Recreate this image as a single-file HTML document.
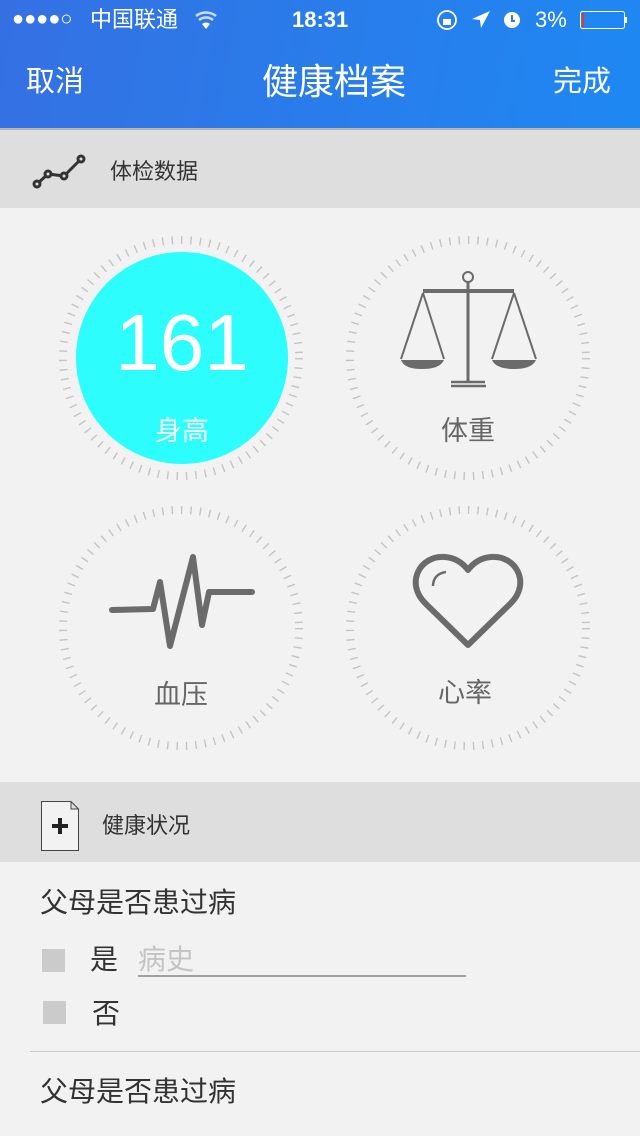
<!DOCTYPE html>
<html><head><meta charset="utf-8"><style>
*{margin:0;padding:0;box-sizing:border-box}
body{width:640px;height:1136px;overflow:hidden;background:#f2f2f2;font-family:"Liberation Sans","Noto Sans CJK SC",sans-serif;position:relative}
.a{position:absolute;white-space:nowrap;line-height:1}
</style></head><body>
<div class="a" style="left:0;top:0;width:640px;height:128px;background:linear-gradient(100deg,#3570e3,#1e88f2)"></div>
<div class="a" style="left:0;top:128px;width:640px;height:2px;background:#b5b5b5"></div>
<div class="a" style="left:0;top:130px;width:640px;height:78px;background:#dedede"></div>
<div class="a" style="left:0;top:782px;width:640px;height:80px;background:#dedede"></div>
<div class="a" style="left:30px;top:1051px;width:610px;height:1px;background:#c8c8c8"></div>

<div class="a" style="left:12px;top:9px;color:#fff;font-size:20px">●●●●○</div>
<div class="a" style="left:90px;top:9px;color:#fff;font-size:22px">中国联通</div>
<div class="a" style="left:292px;top:9px;color:#fff;font-size:22px;font-weight:bold">18:31</div>
<div class="a" style="left:535px;top:9px;color:#fff;font-size:22px">3%</div>
<svg class="a" style="left:0;top:0" width="640" height="40">
<path d="M196 16a16 16 0 0 1 20 0M199 20a11 11 0 0 1 14 0" stroke="#fff" stroke-width="2.5" fill="none" opacity=".75"/>
<path d="M202 24a6 6 0 0 1 8 0L206 29z" fill="#fff"/>
<circle cx="447" cy="20" r="9" stroke="#fff" stroke-width="1.8" fill="none"/><rect x="443" y="19" width="8" height="6" fill="#fff"/>
<path d="M490 11L472 19l8 1 1 8z" fill="#fff"/>
<circle cx="512" cy="20" r="8" fill="#fff"/><path d="M512 15v6h3" stroke="#3a75e8" stroke-width="2" fill="none"/>
<rect x="580.5" y="11.5" width="44" height="17" rx="2" stroke="#fff" fill="none"/><rect x="582" y="13" width="2" height="14" fill="#e33"/><rect x="625" y="17" width="2" height="6" fill="#fff"/>
</svg>
<div class="a" style="left:26px;top:68px;color:#fff;font-size:29px">取消</div>
<div class="a" style="left:262px;top:64px;color:#fff;font-size:36px">健康档案</div>
<div class="a" style="left:553px;top:68px;color:#fff;font-size:29px">完成</div>

<svg class="a" style="left:0;top:0" width="640" height="1136">
<g stroke="#333" stroke-width="3" fill="none"><path d="M37 184L48 174 64 176 80 160"/><circle cx="37" cy="184" r="3" fill="#ddd"/><circle cx="48" cy="174" r="3" fill="#ddd"/><circle cx="64" cy="176" r="3" fill="#ddd"/><circle cx="81" cy="159" r="3" fill="#ddd"/></g>
<g fill="none" stroke="#c4c4c4" stroke-width="8" stroke-dasharray="1.4 8.02">
<circle cx="181" cy="358" r="118"/><circle cx="468" cy="358" r="118"/><circle cx="181" cy="628" r="118"/><circle cx="468" cy="628" r="118"/></g>
<circle cx="182" cy="358" r="106" fill="#2efdfd"/>
<g stroke="#6b6b6b" fill="none" stroke-width="2">
<circle cx="468" cy="277" r="5"/><path d="M468 282V382" stroke-width="3"/><path d="M423 291H514" stroke-width="4"/>
<path d="M423 293L401 359M423 293L444 359M514 293L492 359M514 293L536 359"/>
<path d="M451 382H485M451 386H486" stroke-width="2.5"/>
</g>
<path d="M401 360H444Q440 369 422 369T401 360z M492 360H536Q532 369 514 369T492 360z" fill="#6b6b6b"/>
<path d="M112 610L153 609 160 582 170 646 193 557 202 625 209 592 252 592" stroke="#6b6b6b" stroke-width="6" fill="none" stroke-linejoin="round" stroke-linecap="round"/>
<path d="M468 645L425 603C405 583 420 555 445 557C458 558 465 566 468 570C471 566 478 558 491 557C516 555 531 583 511 603Z" stroke="#6b6b6b" stroke-width="6" fill="none" stroke-linejoin="round"/>
<path d="M433 586C433 578 438 573 446 572" stroke="#6b6b6b" stroke-width="2.5" fill="none"/>
<path d="M41.5 801.5H71L78.5 809V850.5H41.5Z M71 801.5V809H78.5" stroke="#444" fill="#f2f2f2"/>
<path d="M60 818V834M52 826H68" stroke="#222" stroke-width="4"/>
<rect x="42" y="949" width="23" height="23" fill="#cbcbcb"/><rect x="43" y="1001" width="23" height="23" fill="#cbcbcb"/>
<rect x="138" y="975" width="328" height="2" fill="#a0a0a0"/>
</svg>
<div class="a" style="left:110px;top:161px;color:#333;font-size:22px">体检数据</div>
<div class="a" style="left:82px;top:303px;width:200px;text-align:center;color:#fff;font-size:80px">161</div>
<div class="a" style="left:155px;top:418px;color:#fff;font-size:27px">身高</div>
<div class="a" style="left:441px;top:418px;color:#666;font-size:27px">体重</div>
<div class="a" style="left:154px;top:682px;color:#666;font-size:27px">血压</div>
<div class="a" style="left:438px;top:680px;color:#666;font-size:27px">心率</div>
<div class="a" style="left:102px;top:815px;color:#333;font-size:22px">健康状况</div>
<div class="a" style="left:40px;top:889px;color:#333;font-size:28px">父母是否患过病</div>
<div class="a" style="left:90px;top:946px;color:#333;font-size:28px">是</div>
<div class="a" style="left:138px;top:946px;color:#c4c4c4;font-size:28px">病史</div>
<div class="a" style="left:92px;top:1000px;color:#333;font-size:28px">否</div>
<div class="a" style="left:40px;top:1078px;color:#333;font-size:28px">父母是否患过病</div>
</body></html>
